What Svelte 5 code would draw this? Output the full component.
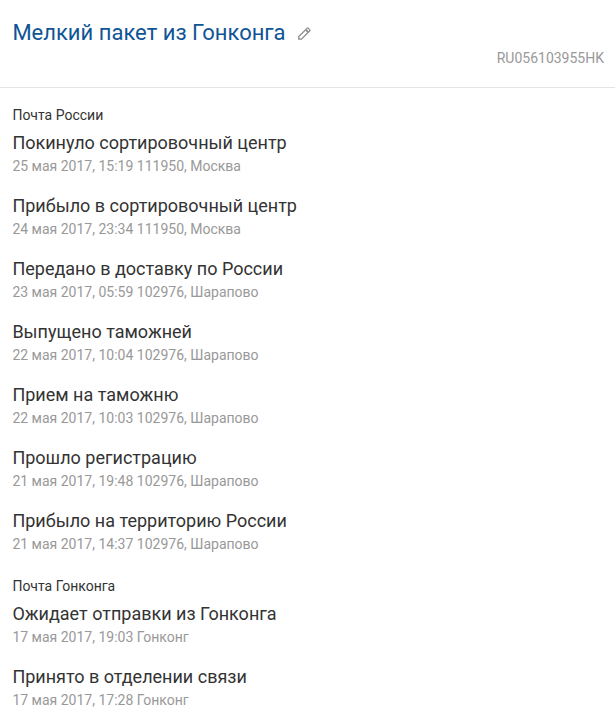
<script>
  const tracking = "RU056103955HK";

  let carriers = [
    {
      name: "Почта России",
      events: [
        { status: "Покинуло сортировочный центр", info: "25 мая 2017, 15:19 111950, Москва" },
        { status: "Прибыло в сортировочный центр", info: "24 мая 2017, 23:34 111950, Москва" },
        { status: "Передано в доставку по России", info: "23 мая 2017, 05:59 102976, Шарапово" },
        { status: "Выпущено таможней", info: "22 мая 2017, 10:04 102976, Шарапово" },
        { status: "Прием на таможню", info: "22 мая 2017, 10:03 102976, Шарапово" },
        { status: "Прошло регистрацию", info: "21 мая 2017, 19:48 102976, Шарапово" },
        { status: "Прибыло на территорию России", info: "21 мая 2017, 14:37 102976, Шарапово" },
      ],
    },
    {
      name: "Почта Гонконга",
      events: [
        { status: "Ожидает отправки из Гонконга", info: "17 мая 2017, 19:03 Гонконг" },
        { status: "Принято в отделении связи", info: "17 мая 2017, 17:28 Гонконг" },
      ],
    },
  ];
</script>

<main>
  <header>
    <div class="title">
      <h1>Мелкий пакет из Гонконга</h1>
      <svg width="13" height="13" viewBox="0 0 13 13" fill="none" stroke="#8c8c8c" stroke-width="1.3">
        <path d="M.8 12.2V9.6L9 1.4a1 1 0 0 1 1.4 0l1.2 1.2a1 1 0 0 1 0 1.4L3.4 12.2z" />
        <path d="m7.8 2.8 2.4 2.4" stroke-width="1.8" />
      </svg>
    </div>
    <div class="number">{tracking}</div>
  </header>

  <div class="history">
    {#each carriers as carrier}
      <section>
        <h2>{carrier.name}</h2>
        {#each carrier.events as event}
          <div class="event">
            <h3>{event.status}</h3>
            <p>{event.info}</p>
          </div>
        {/each}
      </section>
    {/each}
  </div>
</main>

<style>
  :global(body) {
    background: #fff;
  }

  main {
    height: 721px;
    overflow: hidden;
    font-family: "Roboto", sans-serif;
    color: #333;
  }

  h1,
  h2,
  h3,
  p {
    margin: 0;
    font-weight: 400;
    white-space: nowrap;
  }

  header {
    box-sizing: border-box;
    height: 88px;
    padding: 18px 11px 0 12.4px;
    border-bottom: 1px solid #e4e4e4;
  }

  .title {
    display: flex;
    align-items: center;
    gap: 12px;
  }

  h1 {
    font-size: 22px;
    line-height: 30px;
    color: #0f5596;
  }

  svg {
    margin-top: 1px;
  }

  .number {
    text-align: right;
    font-size: 14px;
    line-height: 20px;
    color: #999;
  }

  .history {
    padding: 17px 12.4px 0;
  }

  section {
    margin-bottom: 22px;
  }

  h2 {
    font-size: 14px;
    line-height: 20px;
    margin-bottom: 6px;
  }

  .event {
    height: 45px;
  }

  .event + .event {
    margin-top: 18px;
  }

  h3 {
    font-size: 18px;
    line-height: 24px;
    margin-bottom: 1px;
  }

  p {
    font-size: 14px;
    line-height: 20px;
    color: #999;
  }
</style>
